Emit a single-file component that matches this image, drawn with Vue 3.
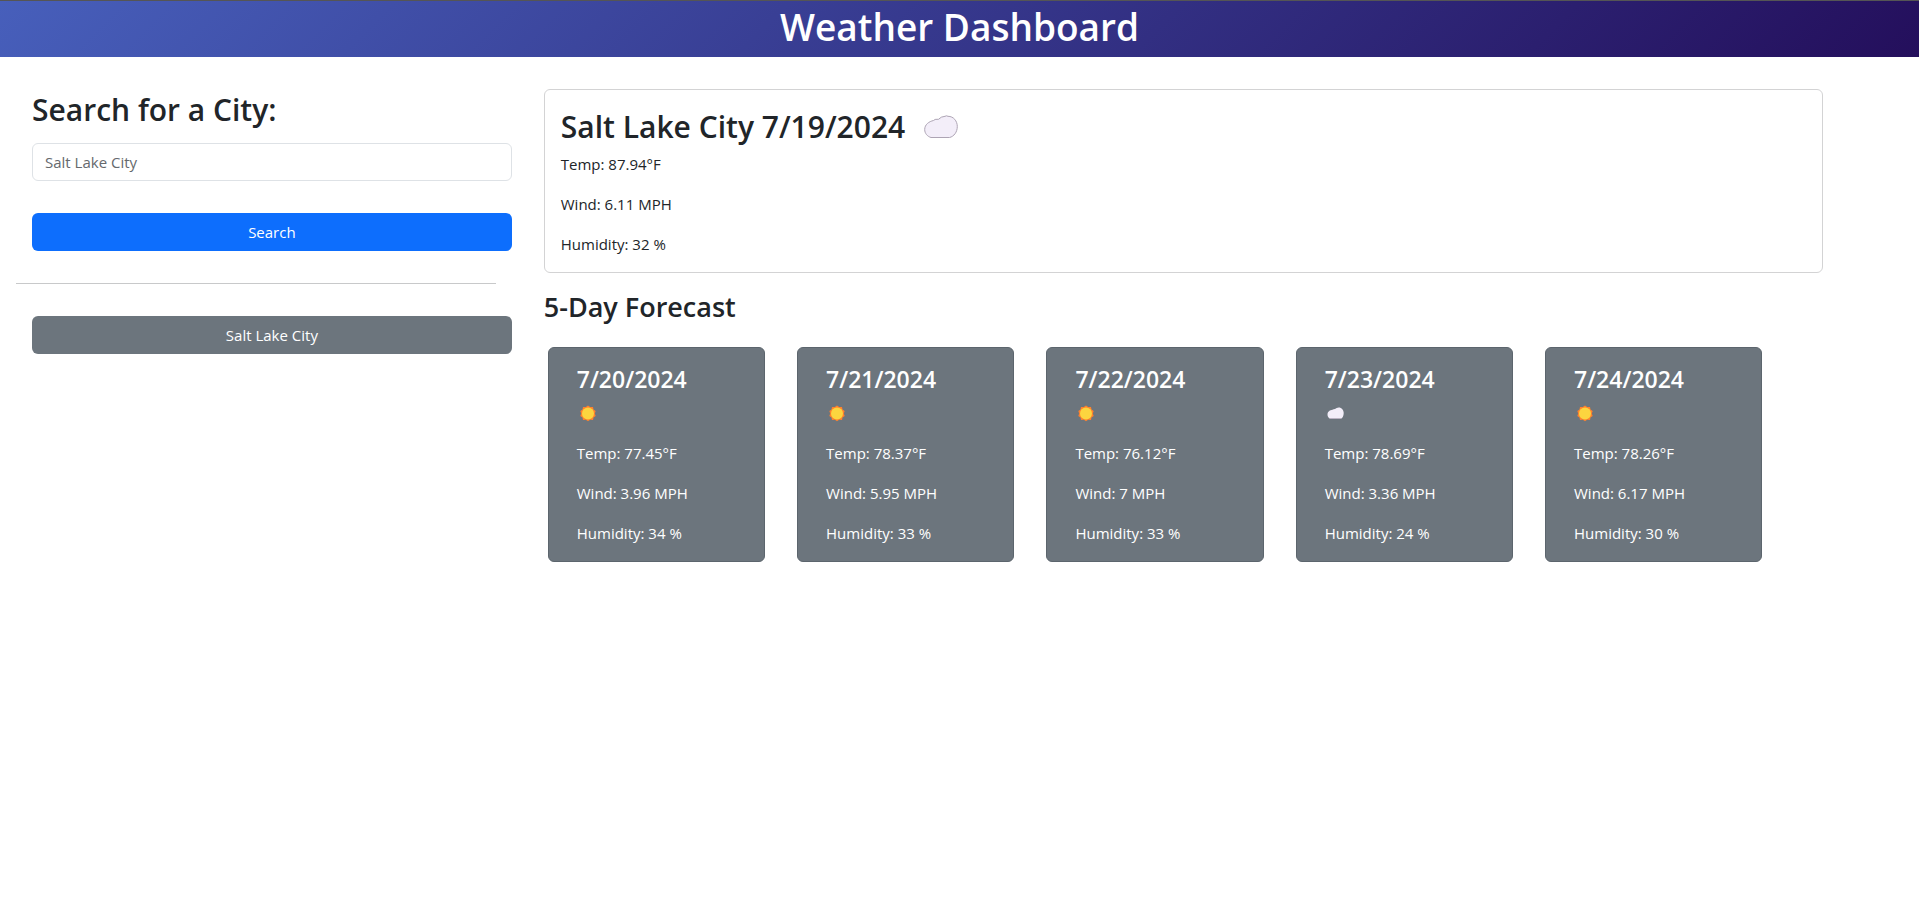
<script setup>
import { ref } from 'vue'

const query = ref('')
const history = ['Salt Lake City']
const current = { city: 'Salt Lake City', date: '7/19/2024', temp: '87.94', wind: '6.11', humidity: 32 }
const forecast = [
  { date: '7/20/2024', icon: 'sun', temp: '77.45', wind: '3.96', humidity: 34 },
  { date: '7/21/2024', icon: 'sun', temp: '78.37', wind: '5.95', humidity: 33 },
  { date: '7/22/2024', icon: 'sun', temp: '76.12', wind: '7', humidity: 33 },
  { date: '7/23/2024', icon: 'cloud', temp: '78.69', wind: '3.36', humidity: 24 },
  { date: '7/24/2024', icon: 'sun', temp: '78.26', wind: '6.17', humidity: 30 }
]
</script>

<template>
  <header class="banner">
    <h1>Weather Dashboard</h1>
  </header>
  <div class="layout">
    <aside class="sidebar">
      <form class="search" @submit.prevent>
        <h2><label for="city">Search for a City:</label></h2>
        <input id="city" v-model="query" class="field" type="text" placeholder="Salt Lake City" />
        <button class="btn primary" type="submit">Search</button>
      </form>
      <hr />
      <button v-for="city in history" :key="city" class="btn secondary" type="button">{{ city }}</button>
    </aside>
    <main class="content">
      <section class="current">
        <h2>
          {{ current.city }} {{ current.date }}
          <svg class="cloud-large" viewBox="0 0 34 24" aria-hidden="true">
            <path d="M7 22.5C3.500 21.500.7 18.500.7 14.500C.7 9.500 5 6.500 9.500 5.500Q11 4 13 4.300L14.500 4.300Q17 1.500 21 1.300L22.500 .8L24 1.300C29.500 1.300 33.300 6 33.300 11.500C33.300 17 30 21.500 25.500 22.500Z" fill="#f3eef9" stroke="#ada4b4" />
          </svg>
        </h2>
        <p>Temp: {{ current.temp }}°F</p>
        <p>Wind: {{ current.wind }} MPH</p>
        <p>Humidity: {{ current.humidity }} %</p>
      </section>
      <h3>5-Day Forecast</h3>
      <div class="days">
        <article v-for="day in forecast" :key="day.date" class="day">
          <h4>{{ day.date }}</h4>
          <div class="weather">
            <svg v-if="day.icon === 'sun'" viewBox="0 0 22 24" aria-hidden="true">
              <path d="M11 4.500L13.200 6L16 6L16.500 8.500L18.700 10L17.800 12.500L18.700 15L16.500 16.500L16 19L13.200 18.700L11 20.300L8.800 18.700L6 19L5.500 16.500L3.300 15L4.200 12.500L3.300 10L5.500 8.500L6 6L8.800 6Z" fill="#ff822d" />
              <circle cx="11" cy="12.400" r="6" fill="#fcd53f" />
            </svg>
            <svg v-else viewBox="0 0 22 24" aria-hidden="true">
              <path d="M5 17.800C3.500 17 2.500 15.500 2.500 13.500C2.500 10.500 5 9 7.500 8.700Q8.500 8 10 8Q11.500 6.500 13.700 6.500C16.700 6.500 18.700 9 18.700 12C18.700 15 17.500 17 16 17.800Z" fill="#f3eef9" />
              <path d="M5 17.500H16" stroke="#bab2c2" />
            </svg>
          </div>
          <p>Temp: {{ day.temp }}°F</p>
          <p>Wind: {{ day.wind }} MPH</p>
          <p>Humidity: {{ day.humidity }} %</p>
        </article>
      </div>
    </main>
  </div>
</template>

<style>
body {
  margin: 0;
  background: #fff;
  color: #212529;
  font: 400 15px/24px "Open Sans", "Noto Sans", sans-serif;
}
</style>

<style scoped>
* {
  box-sizing: border-box;
}
h1, h2, h3, h4, p {
  margin: 0;
}
h1, h2, h3, h4 {
  font-weight: 600;
}
.banner {
  padding-bottom: 4px;
  border-top: 1px solid #555;
  background: linear-gradient(135deg, #475fbb, #240f5c);
  color: #fff;
  text-align: center;
}
h1 {
  font-size: 37px;
  line-height: 52px;
}
h2 {
  font-size: 30px;
  line-height: 42px;
}
h3 {
  margin: 16px 0 22px;
  font-size: 27px;
  line-height: 36px;
}
h4 {
  margin-bottom: 6px;
  font-size: 23px;
  line-height: 31px;
}
.layout {
  display: flex;
  align-items: flex-start;
  padding-top: 32px;
}
.sidebar {
  flex: 0 0 25%;
  margin: 0 32px;
}
.search {
  display: flex;
  flex-direction: column;
}
.field {
  width: 100%;
  height: 38px;
  margin: 12px 0 32px;
  padding: 6px 12px;
  border: 1px solid #dee2e6;
  border-radius: 6px;
  background: #fff;
  color: #212529;
  font: inherit;
}
.field::placeholder {
  color: #65696d;
  opacity: 1;
}
.btn {
  display: block;
  width: 100%;
  height: 38px;
  padding: 6px 12px;
  border: 0;
  border-radius: 6px;
  color: #fff;
  font: inherit;
  cursor: pointer;
}
.primary {
  background: #0d6efd;
}
.secondary {
  background: #6c757d;
}
hr {
  margin: 32px 16px 32px -16px;
  border: 0;
  border-top: 1px solid #c8c9ca;
}
.content {
  flex: 0 0 66.6667%;
}
.current {
  padding: 16px;
  border: 1px solid #d3d3d4;
  border-radius: 6px;
}
.current h2 {
  display: flex;
  align-items: center;
  gap: 19px;
  margin-bottom: 4px;
}
.cloud-large {
  width: 34px;
  height: 24px;
}
p + p {
  margin-top: 16px;
}
.days {
  display: flex;
  gap: 32px;
  margin-left: 4px;
}
.day {
  flex: 0 0 17.04%;
  padding: 16px 28px;
  border: 1px solid #5c656d;
  border-radius: 6px;
  background: #6c757d;
  color: #fff;
}
.weather {
  height: 24px;
  margin-bottom: 16px;
}
.weather svg {
  display: block;
  width: 22px;
  height: 24px;
}
</style>
